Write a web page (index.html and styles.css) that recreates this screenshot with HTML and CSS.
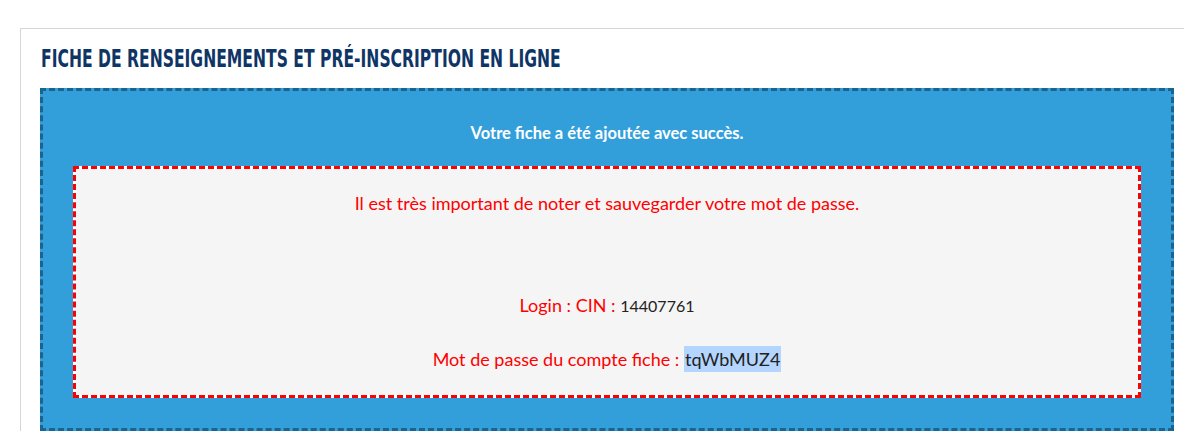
FILE: index.html
```html
<!DOCTYPE html>
<html lang="fr">
<head>
<meta charset="utf-8">
<link rel="stylesheet" href="styles.css">
</head>
<body>
<div class="card">
  <h1 class="title"><span class="title-text">FICHE DE RENSEIGNEMENTS ET PRÉ-INSCRIPTION EN LIGNE</span></h1>
  <div class="success">
    <p class="success-msg">Votre fiche a été ajoutée avec succès.</p>
    <div class="notice">
      <p class="warn">Il est très important de noter et sauvegarder votre mot de passe.</p>
      <p class="line login">Login : CIN : <span class="val small">14407761</span></p>
      <p class="line">Mot de passe du compte fiche : <span class="val sel">tqWbMUZ4</span></p>
    </div>
  </div>
</div>
</body>
</html>
```
FILE: styles.css
```css
html, body { margin: 0; padding: 0; background: #fff; overflow: hidden; }
body { width: 1184px; height: 431px; }
.card {
  margin: 28px 0 0 20px;
  width: 1200px;
  border-top: 1px solid #d6d6d6;
  border-left: 1px solid #d6d6d6;
  padding: 0 0 0 19px;
  box-sizing: border-box;
}
.title {
  margin: 0;
  padding: 18px 0 0 1px;
  height: 41px;
  font-family: "DejaVu Sans Condensed", "DejaVu Sans", sans-serif;
  font-size: 24.5px;
  font-weight: bold;
  color: #0f3566;
  line-height: 24px;
  white-space: nowrap;
}
.title-text {
  display: inline-block;
  transform: scaleX(0.707);
  transform-origin: left center;
}
.success {
  width: 1134px;
  box-sizing: border-box;
  background: #339fda;
  border: 3px dashed #1a6590;
  padding: 0 30px 30px 30px;
  font-family: "Lato", "Open Sans", sans-serif;
  text-align: center;
}
.success-msg {
  margin: 0;
  padding: 31px 0 0;
  height: 44px;
  color: #fff;
  font-weight: bold;
  font-size: 16.5px;
  line-height: 22px;
}
.notice {
  border: 3px dashed #ff0000;
  background: linear-gradient(#f5f5f5, #f5f5f5) padding-box, #fff border-box;
  padding: 22px 0 23px;
  color: #ff0000;
  font-size: 18px;
}
.warn { margin: 0; line-height: 24px; }
.line { margin: 0; line-height: 26px; }
.login { margin-top: 77px; }
.line + .line { margin-top: 27px; }
.val { color: #222; }
.small { font-size: 16px; }
.sel { background: #b4d5fe; padding: 2px 1px; }
```
